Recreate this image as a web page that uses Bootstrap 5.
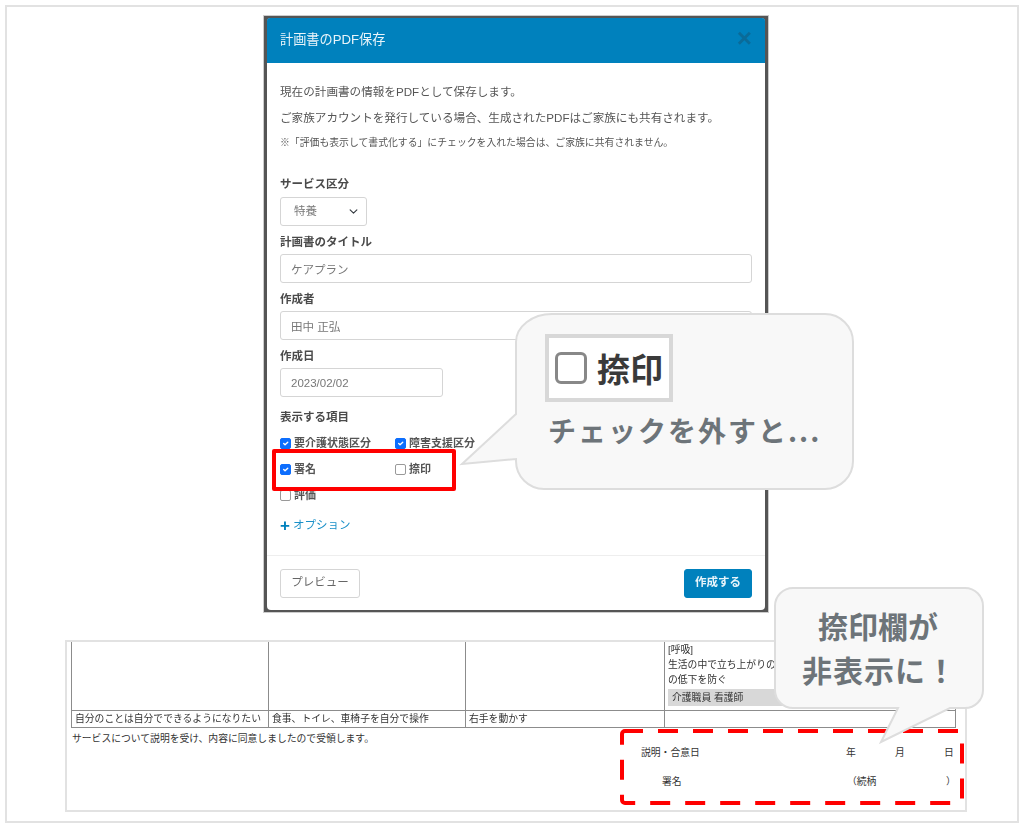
<!DOCTYPE html>
<html lang="ja">
<head>
<meta charset="UTF-8">
<title>計画書のPDF保存</title>
<link href="https://cdn.jsdelivr.net/npm/bootstrap@5.3.0/dist/css/bootstrap.min.css" rel="stylesheet">
<style>
body { background:#fff; margin:0; overflow:hidden; font-family:"Liberation Sans","Noto Sans CJK JP",sans-serif; color:#555; }
.shot-frame { position:relative; width:1014px; height:818px; margin:5px 0 0 5px; border:2px solid #e2e2e2; }
.shot-modal { position:static; width:506px; height:auto; margin:8px 0 0 256px; overflow:visible; border:1px solid #ccc; background:#555; padding:2px 3px; filter:blur(.35px); }
.shot-dialog { margin:0; max-width:none; width:auto; }
.shot-content { border:0; border-radius:4px; font-size:11.6px; }
.shot-head { background:#0081bd; height:45px; padding:0 13px; color:#e8f4fa; border:0; border-radius:3px 3px 0 0; }
.shot-head h5 { font-size:13.2px; margin:0 0 2px; font-weight:400; }
.shot-x { font:700 26px/1 "Liberation Sans",sans-serif; color:#0a6b99; border:0; background:none; padding:0; margin-bottom:5px; }
.shot-body { padding:20px 13px 0; height:492px; }
.shot-body p { margin:0 0 9px; line-height:17px; }
.shot-body .shot-note { font-size:9.85px; margin-bottom:25px; line-height:16px; }
.shot-label { font-weight:700; font-size:11.5px; line-height:16px; color:#4a4a4a; margin:0 0 4px; display:block; }
.shot-field { margin-bottom:8px; }
.shot-field-first .shot-label { margin-bottom:5px; }
.shot-field .form-control, .shot-field .form-select { height:29px; font-size:11.5px; color:#777; border-color:#d5d5d5; padding:0 10px; border-radius:3px; }
.shot-field .form-select { width:87px; padding-left:13px; background-size:11px 9px; background-position:right 7px center; }
.shot-date { width:163px; }
.shot-items { margin:12px 0 0; }
.shot-checks { display:grid; grid-template-columns:115px 115px; row-gap:9px; margin-top:10px; }
.shot-check { display:flex; align-items:center; gap:3px; min-height:17px; font-size:11px; font-weight:700; color:#555; margin:0; padding:0; }
.shot-check .form-check-input { width:11px; height:11px; margin:0; border-radius:2px; border-color:#999; flex:none; }
.shot-check .form-check-input:checked { background-color:#0d6efd; border-color:#0d6efd; }
.shot-option { display:flex; align-items:center; gap:3px; margin-top:13px; color:#1a90c8; font-size:11.5px; text-decoration:none; line-height:17px; }
.shot-plus { color:#0081bd; font-size:17px; font-weight:700; line-height:17px; }
.shot-foot { height:55px; padding:0 13px; border-top:1px solid #eee; }
.shot-foot .btn { margin:0; font-size:11.5px; height:29px; line-height:1; padding:0 10px; border-radius:3px; }
.shot-preview { width:80px; color:#666; border-color:#d5d5d5; background:#fff; }
.shot-create { width:68px; background:#0081bd; border-color:#0081bd; color:#e8f4fa; font-weight:700; }
.doc-wrap { width:902px; height:172px; margin:27px 0 0 58px; border:2px solid #e2e2e2; overflow:hidden; font-size:9.8px; color:#333; padding-left:4px; }
.doc-table { width:884px; table-layout:fixed; border-collapse:collapse; filter:blur(.3px); }
.doc-table td { border:1px solid #8c8c8c; border-top:0; padding:0 3px; vertical-align:top; line-height:15px; }
.doc-tall td { height:68px; }
.doc-short td { height:17px; vertical-align:middle; }
.doc-tag { background:#d8d8d8; padding:1px 4px; margin-top:2px; height:17px; line-height:16px; }
.doc-lead { padding:4px 0 0 1px; line-height:14px; }
.doc-sign { display:grid; grid-template-columns:21px 184px 49px 49px 20px; margin:-1px 0 0 570px; width:323px; row-gap:14px; line-height:15px; }
.doc-date { grid-column:1 / 3; }
.doc-name { grid-column:2; }
.doc-rel { grid-column:3 / 5; margin-left:1px; }
.doc-close { margin-left:2px; }
.bubble { position:absolute; }
.bubble-text { position:absolute; color:#6d7479; font-weight:700; font-family:"Noto Sans CJK JP",sans-serif; white-space:nowrap; line-height:1; }
.bubble-check { position:absolute; left:538px; top:327px; width:128px; height:68px; background:#fff; border:4px solid #d8d8d8; display:flex; align-items:center; padding-left:6px; gap:10px; color:#3a3a3a; font:700 33px/1 "Noto Sans CJK JP",sans-serif; }
.bubble-box { width:32px; height:32px; border:3px solid #888; border-radius:6px; background:#fff; flex:none; }
.mark-red { position:absolute; left:265px; top:442px; width:184px; height:42px; border:4px solid #f00; border-radius:2px; }
.mark-dash { position:absolute; left:613px; top:722px; }
</style>
</head>
<body>
<div class="shot-frame">

  <div class="modal d-block shot-modal">
    <div class="modal-dialog shot-dialog">
      <div class="modal-content shot-content">
        <div class="modal-header shot-head d-flex justify-content-between align-items-center">
          <h5>計画書のPDF保存</h5>
          <button type="button" class="shot-x">×</button>
        </div>
        <div class="modal-body shot-body">
          <p>現在の計画書の情報をPDFとして保存します。</p>
          <p>ご家族アカウントを発行している場合、生成されたPDFはご家族にも共有されます。</p>
          <p class="shot-note">※「評価も表示して書式化する」にチェックを入れた場合は、ご家族に共有されません。</p>

          <div class="shot-field shot-field-first">
            <label class="shot-label">サービス区分</label>
            <select class="form-select"><option>特養</option></select>
          </div>
          <div class="shot-field">
            <label class="shot-label">計画書のタイトル</label>
            <input class="form-control" type="text" value="ケアプラン">
          </div>
          <div class="shot-field">
            <label class="shot-label">作成者</label>
            <input class="form-control" type="text" value="田中 正弘">
          </div>
          <div class="shot-field">
            <label class="shot-label">作成日</label>
            <input class="form-control shot-date" type="text" value="2023/02/02">
          </div>
          <label class="shot-label shot-items">表示する項目</label>
          <div class="shot-checks">
            <label class="shot-check"><input class="form-check-input" type="checkbox" checked>要介護状態区分</label>
            <label class="shot-check"><input class="form-check-input" type="checkbox" checked>障害支援区分</label>
            <label class="shot-check"><input class="form-check-input" type="checkbox" checked>署名</label>
            <label class="shot-check"><input class="form-check-input" type="checkbox">捺印</label>
            <label class="shot-check"><input class="form-check-input" type="checkbox">評価</label>
          </div>
          <a class="shot-option" href="#"><span class="shot-plus">+</span>オプション</a>
        </div>
        <div class="modal-footer shot-foot d-flex justify-content-between align-items-center">
          <button type="button" class="btn shot-preview">プレビュー</button>
          <button type="button" class="btn shot-create">作成する</button>
        </div>
      </div>
    </div>
  </div>

  <div class="doc-wrap">
    <table class="doc-table">
      <colgroup><col width="197"><col width="197"><col width="199"><col width="291"></colgroup>
      <tr class="doc-tall">
        <td></td><td></td><td></td>
        <td>[呼吸]<br>生活の中で立ち上がりの<br>の低下を防ぐ<div class="doc-tag">介護職員 看護師</div></td>
      </tr>
      <tr class="doc-short">
        <td>自分のことは自分でできるようになりたい</td>
        <td>食事、トイレ、車椅子を自分で操作</td>
        <td>右手を動かす</td>
        <td></td>
      </tr>
    </table>
    <div class="doc-lead">サービスについて説明を受け、内容に同意しましたので受領します。</div>
    <div class="doc-sign">
      <span class="doc-date">説明・合意日</span><span>年</span><span>月</span><span>日</span>
      <span class="doc-name">署名</span><span class="doc-rel">（続柄</span><span class="doc-close">）</span>
    </div>
  </div>

  <!-- annotations over the screenshot -->
  <div class="mark-red"></div>

  <svg class="bubble" style="left:447px;top:299px" width="410" height="190" viewBox="446 298 410 190">
    <path d="M544 306 H817 A28 28 0 0 1 845 334 V453 A28 28 0 0 1 817 481 H536 A28 28 0 0 1 508 453 V451 L454 456 L508 406 V334 A36 28 0 0 1 544 306 Z" fill="#f8f8f8" stroke="#ddd" stroke-width="2"/>
  </svg>
  <div class="bubble-check"><span class="bubble-box"></span>捺印</div>
  <div class="bubble-text" style="left:541px;top:409px;font-size:28px;letter-spacing:2px">チェックを外すと...</div>

  <svg class="mark-dash" width="346" height="78" viewBox="0 0 346 78">
    <rect x="2" y="2" width="340" height="72" rx="3" fill="none" stroke="#f00" stroke-width="4" stroke-dasharray="20 15" stroke-dashoffset="2"/>
  </svg>

  <svg class="bubble" style="left:761px;top:575px" width="222" height="164" viewBox="760 574 222 164">
    <path d="M785 580 H957 A18 18 0 0 1 975 598 V682 A18 18 0 0 1 957 700 H942 L873 734 L890 700 H785 A18 18 0 0 1 767 682 V598 A18 18 0 0 1 785 580 Z" fill="#f8f8f8" stroke="#ddd" stroke-width="2"/>
  </svg>
  <div class="bubble-text" style="left:811px;top:603px;font-size:30px">捺印欄が</div>
  <div class="bubble-text" style="left:795px;top:647px;font-size:30px;letter-spacing:1px">非表示に！</div>
</div>
<script src="https://cdn.jsdelivr.net/npm/bootstrap@5.3.0/dist/js/bootstrap.bundle.min.js"></script>
</body>
</html>
